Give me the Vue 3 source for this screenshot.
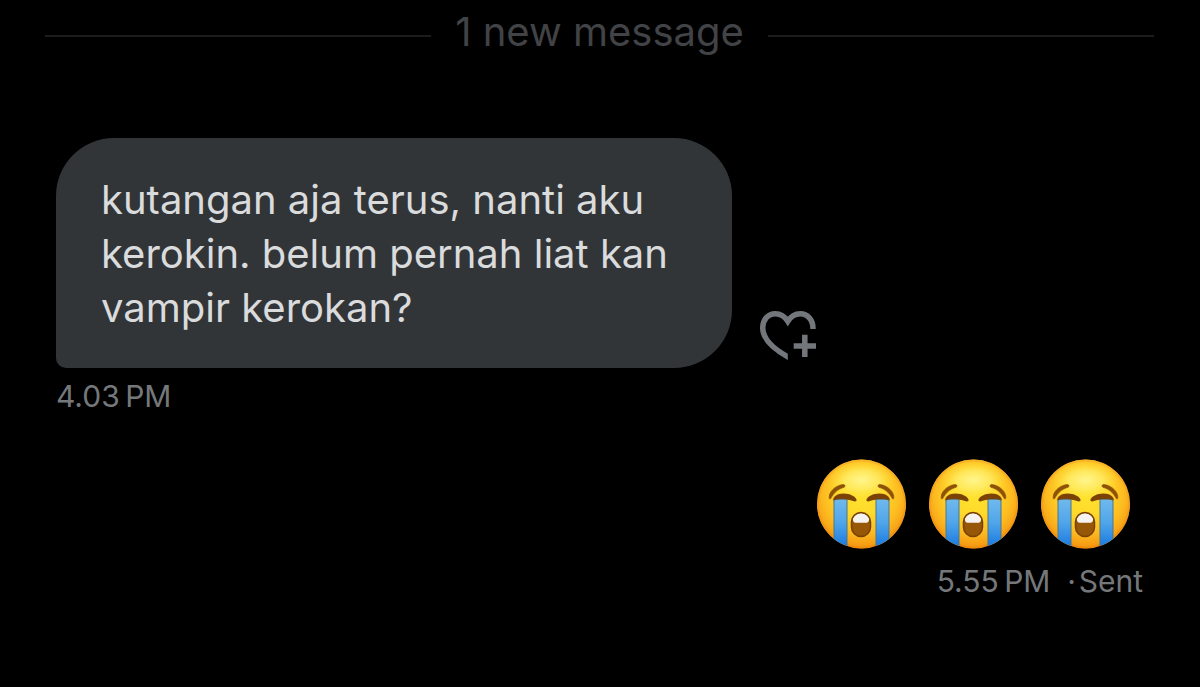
<script setup>
const received = {
  text: 'kutangan aja terus, nanti aku kerokin. belum pernah liat kan vampir kerokan?',
  time: '4.03\u2009PM',
}
const sent = { faces: 3, time: '5.55\u2009PM', status: 'Sent' }
</script>

<template>
  <main class="chat">
    <div class="divider"><span>1 new message</span></div>

    <section class="received">
      <div class="row">
        <p class="bubble">{{ received.text }}</p>
        <button class="react" type="button" aria-label="Add reaction">
          <svg viewBox="18 18 60 54" width="60" height="54" fill="none">
            <defs>
              <clipPath id="heart-cut">
                <path d="M18 18H78V39H47.8V72H18Z" />
              </clipPath>
            </defs>
            <path
              clip-path="url(#heart-cut)"
              d="M73 41V38.500C73 29.800 67.500 23.700 60.300 23.700C54.600 23.700 50.600 26.800 47.800 31.300C45 26.800 41 23.700 35.300 23.700C28.100 23.700 22.700 29.800 22.700 37.500C22.700 49 33.500 59 47.800 66.800L52 69"
              stroke="#73777b"
              stroke-width="5.500"
            />
            <path d="M64.800 44.700V67M53.700 56H76" stroke="#73777b" stroke-width="5.500" />
          </svg>
        </button>
      </div>
      <div class="meta">{{ received.time }}</div>
    </section>

    <section class="sent">
      <svg class="defs" width="0" height="0" aria-hidden="true">
        <defs>
          <radialGradient id="skin" cx="44.500" cy="36" r="55" gradientUnits="userSpaceOnUse">
            <stop offset="0" stop-color="#ffe22e" />
            <stop offset="0.4" stop-color="#ffd92b" />
            <stop offset="0.7" stop-color="#fdbb20" />
            <stop offset="1" stop-color="#f2900f" />
          </radialGradient>
          <radialGradient id="shine">
            <stop offset="0" stop-color="#fff89a" stop-opacity="0.9" />
            <stop offset="0.5" stop-color="#fff27a" stop-opacity="0.6" />
            <stop offset="1" stop-color="#ffe642" stop-opacity="0" />
          </radialGradient>
          <linearGradient id="rim" x1="0" y1="0" x2="0" y2="1">
            <stop offset="0" stop-color="#f5ad28" />
            <stop offset="1" stop-color="#ee880d" />
          </linearGradient>
          <linearGradient id="tear" x1="0" y1="0" x2="0" y2="1">
            <stop offset="0" stop-color="#70b9ed" />
            <stop offset="0.5" stop-color="#50a5e9" />
            <stop offset="1" stop-color="#1978df" />
          </linearGradient>
          <clipPath id="face-edge"><circle cx="44.500" cy="45" r="44.500" /></clipPath>
          <clipPath id="mouth-edge"><rect x="35" y="54" width="18" height="23" rx="9" /></clipPath>
        </defs>
      </svg>
      <div class="faces">
        <svg
          v-for="n in sent.faces"
          :key="n"
          class="face"
          viewBox="0 0 90 90"
          role="img"
          aria-label="Loudly crying face"
        >
          <circle cx="44.500" cy="45" r="44.500" fill="url(#skin)" />
          <circle cx="44.500" cy="45" r="43.500" stroke="url(#rim)" stroke-width="2" stroke-opacity="0.7" fill="none" />
          <ellipse cx="44.500" cy="21" rx="34" ry="19" fill="url(#shine)" />
          <g clip-path="url(#face-edge)">
            <rect x="17" y="40" width="13" height="48" fill="url(#tear)" stroke="#4a7790" stroke-width="1" />
            <rect x="59" y="40" width="13" height="48" fill="url(#tear)" stroke="#4a7790" stroke-width="1" />
          </g>
          <g fill="#7b4205">
            <path d="M16.500 41.500C15.500 38 20 34.500 26.500 34.500C33 34.500 38.500 37.500 39.500 40.500C40 42.500 38 42.800 36 42C31 40.200 22 39.500 16.500 41.500Z" />
            <path d="M72.500 41.500C73.500 38 69 34.500 62.500 34.500C56 34.500 50.500 37.500 49.500 40.500C49 42.500 51 42.800 53 42C58 40.200 67 39.500 72.500 41.500Z" />
          </g>
          <g fill="#8d5208" stroke="#8d5208" stroke-width="0.700" stroke-linejoin="round">
            <path d="M12.300 39.500C11 34 18 26 26.500 25.500C28.500 25.700 28.300 27.700 27 28.300C20.500 30.300 17 33.500 14 39C13.500 40 12.600 40.300 12.300 39.500Z" />
            <path d="M76.700 39.500C78 34 71 26 62.500 25.500C60.500 25.700 60.700 27.700 62 28.300C68.500 30.300 72 33.500 75 39C75.500 40 76.400 40.300 76.700 39.500Z" />
          </g>
          <rect x="34.500" y="53.500" width="19" height="24" rx="9.500" fill="#965706" />
          <path clip-path="url(#mouth-edge)" d="M36 53H52V61C52 63 50.500 63.800 48 63.800H40C37.500 63.800 36 63 36 61Z" fill="#f5f2f0" />
          <rect x="34.500" y="53.500" width="19" height="24" rx="9.500" fill="none" stroke="#784104" stroke-width="1.500" />
        </svg>
      </div>
      <div class="meta">{{ sent.time }}&nbsp; ·&#8202;{{ sent.status }}</div>
    </section>
  </main>
</template>

<style>
body {
  margin: 0;
  background: #000;
}
</style>

<style scoped>
.chat {
  box-sizing: border-box;
  min-height: 100vh;
  padding: 4px 46px 0 45px;
  background: #000;
  font-family: Inter, 'Noto Sans', sans-serif;
}
.divider {
  display: flex;
  align-items: center;
  gap: 24px;
  color: #414346;
  font-size: 40px;
  line-height: 56px;
}
.divider::before,
.divider::after {
  content: '';
  flex: 1;
  height: 2px;
  margin-top: 8px;
  background: #1b1c1e;
}
.received {
  margin-top: 78px;
  padding-left: 11px;
}
.row {
  display: flex;
  align-items: flex-end;
  gap: 26px;
}
.bubble {
  box-sizing: border-box;
  max-width: 676px;
  margin: 0;
  padding: 35px 45px 33px;
  border-radius: 58px 58px 58px 10px;
  background: #323538;
  color: #d9dbdc;
  font-size: 40px;
  line-height: 54px;
}
.react {
  display: flex;
  margin: 0 0 6px;
  padding: 0;
  border: 0;
  background: none;
  cursor: pointer;
}
.meta {
  color: #75787b;
  font-size: 30px;
  line-height: 40px;
}
.received .meta {
  margin-top: 8px;
}
.sent {
  display: flex;
  flex-direction: column;
  align-items: flex-end;
  margin-top: 43px;
}
.defs {
  position: absolute;
}
.faces {
  display: flex;
  gap: 22px;
  margin-right: 23px;
}
.face {
  width: 90px;
  height: 90px;
}
.sent .meta {
  margin: 12px 11px 0 0;
}
</style>
